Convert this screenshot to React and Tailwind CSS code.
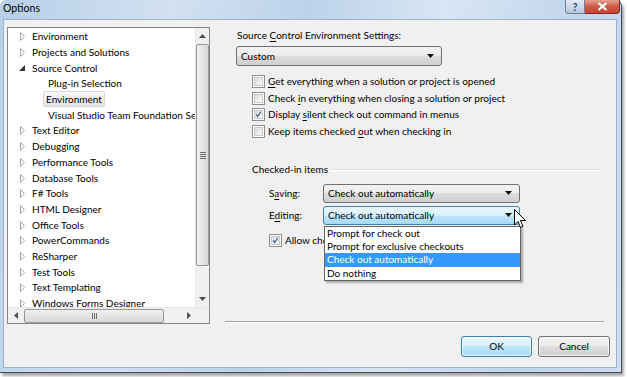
import React from 'react';

const treeItems = [
    { label: 'Environment', level: 1, arrow: 'closed' },
    { label: 'Projects and Solutions', level: 1, arrow: 'closed' },
    { label: 'Source Control', level: 1, arrow: 'open' },
    { label: 'Plug-in Selection', level: 2 },
    { label: 'Environment', level: 2, selected: true },
    { label: 'Visual Studio Team Foundation Server', level: 2 },
    { label: 'Text Editor', level: 1, arrow: 'closed' },
    { label: 'Debugging', level: 1, arrow: 'closed' },
    { label: 'Performance Tools', level: 1, arrow: 'closed' },
    { label: 'Database Tools', level: 1, arrow: 'closed' },
    { label: 'F# Tools', level: 1, arrow: 'closed' },
    { label: 'HTML Designer', level: 1, arrow: 'closed' },
    { label: 'Office Tools', level: 1, arrow: 'closed' },
    { label: 'PowerCommands', level: 1, arrow: 'closed' },
    { label: 'ReSharper', level: 1, arrow: 'closed' },
    { label: 'Test Tools', level: 1, arrow: 'closed' },
    { label: 'Text Templating', level: 1, arrow: 'closed' },
    { label: 'Windows Forms Designer', level: 1, arrow: 'closed' },
];

const Arrow = ({ kind }) => {
    if (kind === 'open') {
        return (
            <svg width="6" height="6" viewBox="0 0 6 6" className="ml-[1px]">
                <path d="M6 0 L6 6 L0 6 Z" fill="#333" />
            </svg>
        );
    }
    return (
        <svg width="5" height="9" viewBox="0 0 5 9">
            <path d="M0.5 0.5 L4.5 4.5 L0.5 8.5 Z" fill="white" stroke="#a6a6a6" />
        </svg>
    );
};

const DownArrow = () => (
    <svg width="7" height="4" viewBox="0 0 7 4">
        <path d="M0 0 L7 0 L3.5 4 Z" fill="#111" />
    </svg>
);

const Checkbox = ({ checked }) => (
    <div className="w-[13px] h-[13px] border border-[#8e8f8f] bg-white p-[1px] shrink-0">
        <div className="w-full h-full bg-gradient-to-br from-[#dcdcdc] to-[#fbfbfb] border border-[#c9c9c9] flex items-center justify-center">
            {checked && (
                <svg width="9" height="9" viewBox="0 0 9 9">
                    <path d="M1.5 4.5 L3.5 7 L7.5 1" fill="none" stroke="#4a5f97" strokeWidth="1.6" />
                </svg>
            )}
        </div>
    </div>
);

const Combo = ({ value, hot, className }) => (
    <div
        className={
            'h-full flex items-center justify-between pl-[4px] pr-[7px] rounded-[3px] border ' +
            (hot
                ? 'border-[#3c7fb1] bg-[linear-gradient(#eaf6fd_0%,#d9f0fc_50%,#bee6fd_50%,#a7d9f5_100%)] '
                : 'border-[#707070] bg-[linear-gradient(#f2f2f2_0%,#ebebeb_50%,#dddddd_50%,#cfcfcf_100%)] ') +
            (className || '')
        }
    >
        <span>{value}</span>
        <DownArrow />
    </div>
);

const Underline = ({ children }) => <span className="underline underline-offset-2">{children}</span>;

const ScrollArrowBtn = ({ dir }) => {
    const paths = {
        up: 'M0 4 L3.5 0 L7 4 Z',
        down: 'M0 0 L7 0 L3.5 4 Z',
        left: 'M4 0 L4 7 L0 3.5 Z',
        right: 'M0 0 L4 3.5 L0 7 Z',
    };
    const vertical = dir === 'up' || dir === 'down';
    return (
        <div className="w-[13px] h-[16px] flex items-center justify-center shrink-0">
            <svg width={vertical ? 7 : 4} height={vertical ? 4 : 7} viewBox={vertical ? '0 0 7 4' : '0 0 4 7'}>
                <path d={paths[dir]} fill="#4d4d4d" />
            </svg>
        </div>
    );
};

const App = () => {
    return (
        <div className="w-[627px] h-[377px] bg-white relative overflow-hidden font-['Lato',sans-serif] text-[10px] text-black">
            {/* window */}
            <div className="w-[622px] h-[373px] flex flex-col rounded-t-[6px] border-r border-b border-[#3f4a58] bg-[linear-gradient(100deg,#b7cfe9_0%,#d2e1f1_25%,#bcd2ea_45%,#d8e6f4_65%,#c0d5ec_85%,#cfdeef_100%)] shadow-[2px_3px_3px_rgba(0,0,0,0.35)]">
                {/* title bar */}
                <div className="h-[19px] flex items-start justify-between pl-[3px] pr-[1px]">
                    <span className="text-[10.5px] leading-[17px]">Options</span>
                    <div className="flex h-[14px]">
                        <div className="w-[20px] h-full rounded-bl-[4px] border border-t-0 border-[#6d7f97] bg-gradient-to-b from-[#e4ecf6] to-[#b6c8de] flex items-center justify-center text-[11px] leading-none text-[#314a6a] font-bold">
                            ?
                        </div>
                        <div className="w-[35px] h-full rounded-br-[4px] border border-t-0 border-l-0 border-[#7a2c22] bg-gradient-to-b from-[#e4a093] via-[#cb5a45] to-[#c7422d] flex items-center justify-center">
                            <svg width="11" height="9" viewBox="0 0 11 9">
                                <path d="M1.5 1 L9.5 8 M9.5 1 L1.5 8" stroke="white" strokeWidth="2.2" />
                            </svg>
                        </div>
                    </div>
                </div>

                {/* client area */}
                <div className="flex-1 ml-[3px] mr-[4px] mb-[4px] bg-[#f0f0f0] border border-[#9eb1c6] flex relative">
                    {/* tree */}
                    <div className="ml-[3px] mt-[7px] w-[203px] h-[297px] border border-[#828790] bg-white flex flex-col">
                        <div className="flex flex-1 min-h-0">
                            <div className="flex-1 min-w-0 overflow-hidden pt-[1px]">
                                {treeItems.map((item, i) => (
                                    <div key={i} className="h-[15.7px] flex items-center whitespace-nowrap">
                                        <div className="w-[22px] shrink-0 flex justify-end pr-[5px]">
                                            {item.arrow && <Arrow kind={item.arrow} />}
                                        </div>
                                        <div className={item.level === 2 ? 'pl-[16px]' : ''}>
                                            <span
                                                className={
                                                    'px-[2px] ' +
                                                    (item.selected
                                                        ? 'border border-[#d9d9d9] rounded-[2px] bg-gradient-to-b from-[#f8f8f8] to-[#e5e5e5] -ml-[3px] py-[1px]'
                                                        : '')
                                                }
                                            >
                                                {item.label}
                                            </span>
                                        </div>
                                    </div>
                                ))}
                            </div>
                            {/* vertical scrollbar */}
                            <div className="w-[14px] bg-[#f0f0f0] border-l border-[#e7e7e7] flex flex-col items-center">
                                <ScrollArrowBtn dir="up" />
                                <div className="w-[13px] h-[222px] rounded-[2px] border border-[#979797] bg-gradient-to-r from-[#f1f1f1] to-[#d7d7d7] flex items-center justify-center">
                                    <div className="flex flex-col gap-[1px]">
                                        <div className="w-[6px] h-[1px] bg-[#6d6d6d]" />
                                        <div className="w-[6px] h-[1px] bg-[#6d6d6d]" />
                                        <div className="w-[6px] h-[1px] bg-[#6d6d6d]" />
                                        <div className="w-[6px] h-[1px] bg-[#6d6d6d]" />
                                    </div>
                                </div>
                                <div className="flex-1" />
                                <ScrollArrowBtn dir="down" />
                            </div>
                        </div>
                        {/* horizontal scrollbar */}
                        <div className="h-[16px] flex items-center bg-[#f0f0f0] border-t border-[#e7e7e7]">
                            <div className="w-[16px] flex justify-center"><ScrollArrowBtn dir="left" /></div>
                            <div className="w-[140px] h-[14px] rounded-[2px] border border-[#979797] bg-gradient-to-b from-[#f1f1f1] to-[#d7d7d7] flex items-center justify-center">
                                <div className="flex gap-[1px]">
                                    <div className="w-[1px] h-[6px] bg-[#6d6d6d]" />
                                    <div className="w-[1px] h-[6px] bg-[#6d6d6d]" />
                                    <div className="w-[1px] h-[6px] bg-[#6d6d6d]" />
                                </div>
                            </div>
                            <div className="flex-1" />
                            <ScrollArrowBtn dir="right" />
                            <div className="w-[14px]" />
                        </div>
                    </div>

                    {/* right side */}
                    <div className="ml-[15px] w-[385px] flex flex-col">
                        <div className="ml-[12px] mt-[7px] leading-[16px]">
                            Source <Underline>C</Underline>ontrol Environment Settings:
                        </div>
                        <div className="ml-[11px] mt-[3px] w-[206px] h-[20px]">
                            <Combo value="Custom" />
                        </div>
                        <div className="ml-[27px] mt-[7px] flex flex-col">
                            {[
                                [<><Underline>G</Underline>et everything when a solution or project is opened</>, false],
                                [<>Check <Underline>i</Underline>n everything when closing a solution or project</>, false],
                                [<>Display <Underline>s</Underline>ilent check out command in menus</>, true],
                                [<>Keep items checked <Underline>o</Underline>ut when checking in</>, false],
                            ].map(([text, checked], i) => (
                                <div key={i} className="h-[16.7px] flex items-center gap-[3px] whitespace-nowrap">
                                    <Checkbox checked={checked} />
                                    <span>{text}</span>
                                </div>
                            ))}
                        </div>
                        {/* group */}
                        <div className="ml-[27px] mt-[22px] flex items-center gap-[3px] h-[16px]">
                            <span className="whitespace-nowrap">Checked-in items</span>
                            <div className="flex-1 mr-[12px] h-[2px] border-t border-[#d5dfe5] border-b border-b-white" />
                        </div>
                        <div className="ml-[44px] mt-[6px] flex flex-col gap-[3px]">
                            <div className="flex items-center h-[19px]">
                                <span className="w-[54px]">S<Underline>a</Underline>ving:</span>
                                <div className="w-[197px] h-full"><Combo value="Check out automatically" /></div>
                            </div>
                            <div className="flex items-center h-[19px]">
                                <span className="w-[54px]">E<Underline>d</Underline>iting:</span>
                                <div className="w-[197px] h-full relative">
                                    <Combo value="Check out automatically" hot />
                                    {/* open dropdown list */}
                                    <div className="absolute left-[1px] top-[20px] w-[197px] z-10 bg-white border border-[#646464] shadow-[2px_2px_2px_rgba(0,0,0,0.3)] leading-[13.3px]">
                                        <div className="px-[2px] h-[13.3px]">Prompt for check out</div>
                                        <div className="px-[2px] h-[13.3px]">Prompt for exclusive checkouts</div>
                                        <div className="px-[2px] h-[13.3px] bg-[#3399ff] text-white">Check out automatically</div>
                                        <div className="px-[2px] h-[13.3px]">Do nothing</div>
                                    </div>
                                    {/* mouse cursor */}
                                    <svg className="absolute left-[191px] top-[3px] z-20" width="13" height="20" viewBox="0 0 13 20">
                                        <path d="M0.5 0.5 L0.5 16 L4 12.5 L6.5 18.5 L9 17.5 L6.5 11.5 L11.5 11.5 Z" fill="white" stroke="black" strokeWidth="1" />
                                    </svg>
                                </div>
                            </div>
                            <div className="flex items-center gap-[3px] h-[18px] mt-[4px] whitespace-nowrap">
                                <Checkbox checked />
                                <span>Allow checked-in items to be edited</span>
                            </div>
                        </div>
                        <div className="flex-1" />
                        {/* bottom separator */}
                        <div className="mr-[6px] h-[2px] border-t border-[#a0a0a0] border-b border-b-white" />
                        <div className="flex justify-end gap-[6px] mt-[13px] mb-[10px]">
                            <button className="w-[71px] h-[21px] rounded-[3px] border border-[#3c7fb1] bg-[linear-gradient(#eaf6fd_0%,#d9f0fc_50%,#bee6fd_50%,#a7d9f5_100%)] shadow-[inset_0_0_0_1px_rgba(255,255,255,0.7)]">
                                OK
                            </button>
                            <button className="w-[72px] h-[21px] rounded-[3px] border border-[#707070] bg-[linear-gradient(#f2f2f2_0%,#ebebeb_50%,#dddddd_50%,#cfcfcf_100%)] shadow-[inset_0_0_0_1px_rgba(255,255,255,0.7)]">
                                Cancel
                            </button>
                        </div>
                    </div>
                </div>
            </div>
        </div>
    );
};

export default App;
